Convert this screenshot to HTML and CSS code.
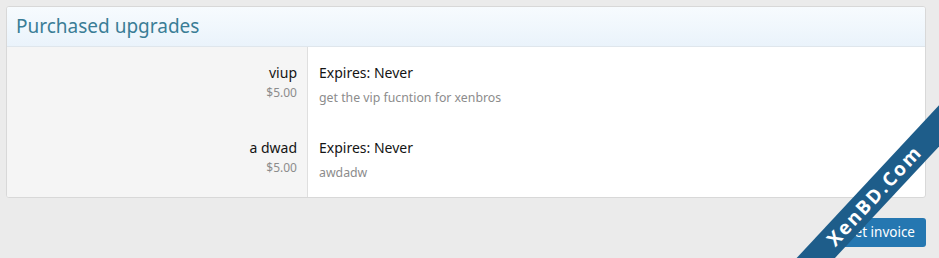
FILE: index.html
```html
<!DOCTYPE html>
<html lang="en">
<head>
  <meta charset="UTF-8" />
  <meta name="viewport" content="width=device-width, initial-scale=1" />
  <title>Purchased upgrades</title>
  <link rel="stylesheet" href="styles.css">
</head>
<body>
  <div class="page">
    <div class="block">
      <h2 class="block-header">Purchased upgrades</h2>
      <div class="block-body">
        <div class="upgrade-row">
          <div class="upgrade-main">
            <div class="upgrade-title">viup</div>
            <div class="upgrade-cost">$5.00</div>
          </div>
          <div class="upgrade-info">
            <div class="upgrade-expires">Expires: Never</div>
            <div class="upgrade-desc">get the vip fucntion for xenbros</div>
          </div>
        </div>
        <div class="upgrade-row">
          <div class="upgrade-main">
            <div class="upgrade-title">a dwad</div>
            <div class="upgrade-cost">$5.00</div>
          </div>
          <div class="upgrade-info">
            <div class="upgrade-expires">Expires: Never</div>
            <div class="upgrade-desc">awdadw</div>
          </div>
        </div>
      </div>
    </div>

    <div class="block-footer">
      <a class="button" href="#">Get invoice</a>
    </div>
  </div>

  <div class="ribbon-clip">
    <div class="ribbon">XenBD.Com</div>
  </div>
</body>
</html>
```

FILE: styles.css
```css
body {
  margin: 0;
  background: #ebebeb;
  font-family: "Segoe UI", "Noto Sans", Arial, sans-serif;
  color: #141414;
  overflow: hidden;
  position: relative;
  height: 258px;
}
.page {
  width: 920px;
  padding: 6px 0 0 6px;
}
.block {
  background: #fff;
  border: 1px solid #d8d8d8;
  border-radius: 3px;
  overflow: hidden;
}
.block-header {
  margin: 0;
  height: 39px;
  line-height: 38px;
  padding: 0 9px;
  font-size: 19px;
  font-weight: normal;
  color: #3a7d96;
  background: linear-gradient(to bottom, #f7fbfe, #eaf3fb);
  border-bottom: 1px solid #dfe6ec;
}
.upgrade-row {
  display: grid;
  grid-template-columns: 301px 1fr;
  height: 75px;
}
.upgrade-main {
  background: #f5f5f5;
  border-right: 1px solid #dfdfdf;
  text-align: right;
  padding: 16px 10px 0 0;
}
.upgrade-title {
  font-size: 14px;
  line-height: 20px;
}
.upgrade-cost {
  font-size: 12px;
  line-height: 20px;
  color: #8c8c8c;
}
.upgrade-info {
  padding: 16px 10px 0 11px;
}
.upgrade-expires {
  font-size: 14px;
  line-height: 20px;
}
.upgrade-desc {
  margin-top: 5px;
  font-size: 12.3px;
  line-height: 20px;
  color: #8c8c8c;
}
.block-footer {
  display: flex;
  justify-content: flex-end;
  margin-top: 20px;
}
.button {
  display: inline-block;
  background: #2577b1;
  color: #fff;
  font-size: 13.5px;
  line-height: 29px;
  padding: 0 11px;
  border-radius: 3px;
  text-decoration: none;
}
.ribbon-clip {
  position: absolute;
  inset: 0;
  overflow: hidden;
}
.ribbon {
  position: absolute;
  left: 668px;
  top: 188px;
  width: 400px;
  height: 28px;
  line-height: 28px;
  padding-left: 18px;
  box-sizing: border-box;
  background: #1e5d8a;
  color: #fff;
  text-align: center;
  font-family: "Open Sans", "Noto Sans", sans-serif;
  font-weight: bold;
  font-size: 19px;
  letter-spacing: 2px;
  transform: rotate(-47deg);
}
```
